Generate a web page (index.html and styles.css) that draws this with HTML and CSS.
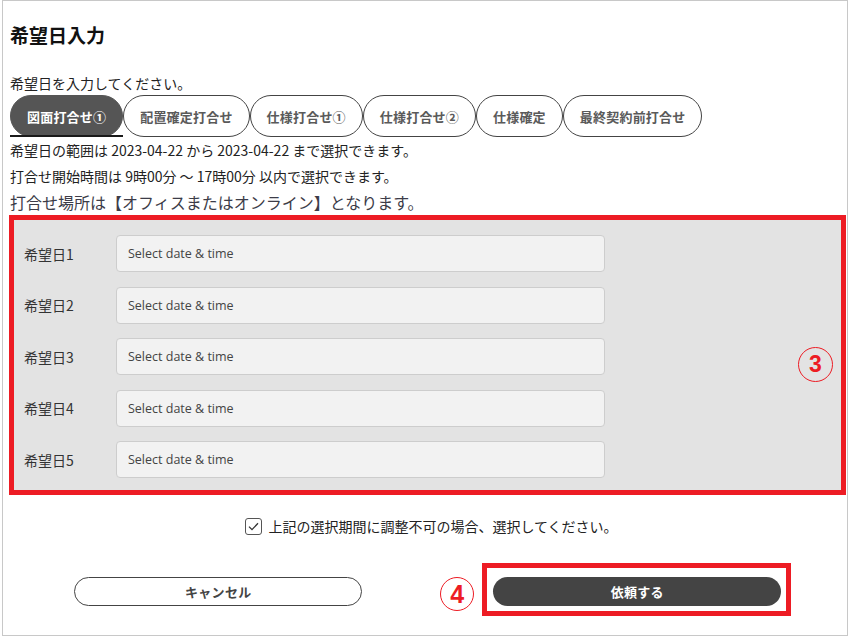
FILE: index.html
```html
<!DOCTYPE html>
<html lang="ja">
<head>
    <meta charset="UTF-8">
    <meta name="viewport" content="width=device-width, initial-scale=1.0">
    <title>希望日入力</title>
    <link rel="stylesheet" href="styles.css">
</head>
<body>
    <div class="page">
        <h1 class="title">希望日入力</h1>
        <p class="lead">希望日を入力してください。</p>
        <ul class="tabs">
            <li class="tab active">図面打合せ①</li>
            <li class="tab">配置確定打合せ</li>
            <li class="tab">仕様打合せ①</li>
            <li class="tab">仕様打合せ②</li>
            <li class="tab">仕様確定</li>
            <li class="tab">最終契約前打合せ</li>
        </ul>
        <p class="info">希望日の範囲は 2023-04-22 から 2023-04-22 まで選択できます。</p>
        <p class="info">打合せ開始時間は 9時00分 ～ 17時00分 以内で選択できます。</p>
        <p class="info place">打合せ場所は【オフィスまたはオンライン】となります。</p>

        <div class="dates">
            <div class="date-list">
                <div class="date-row"><label>希望日1</label><input type="text" placeholder="Select date &amp; time"></div>
                <div class="date-row"><label>希望日2</label><input type="text" placeholder="Select date &amp; time"></div>
                <div class="date-row"><label>希望日3</label><input type="text" placeholder="Select date &amp; time"></div>
                <div class="date-row"><label>希望日4</label><input type="text" placeholder="Select date &amp; time"></div>
                <div class="date-row"><label>希望日5</label><input type="text" placeholder="Select date &amp; time"></div>
            </div>
            <span class="num num-3">3</span>
        </div>

        <label class="agree">
            <span class="check">
                <svg width="11" height="9" viewBox="0 0 11 9"><path d="M1 4.6 L4 7.6 L10 1.2" fill="none" stroke="#333" stroke-width="1.3"/></svg>
            </span>
            上記の選択期間に調整不可の場合、選択してください。
        </label>

        <div class="actions">
            <div class="action">
                <button class="btn btn-cancel">キャンセル</button>
            </div>
            <div class="action">
                <div class="submit-frame">
                    <span class="num num-4">4</span>
                    <button class="btn btn-submit">依頼する</button>
                </div>
            </div>
        </div>
    </div>
</body>
</html>
```

FILE: styles.css
```css
body {
    margin: 0;
    font-family: "Noto Sans CJK JP", "Noto Sans", sans-serif;
    color: #222;
    background: #fff;
}
.page {
    box-sizing: border-box;
    width: 846px;
    height: 636px;
    margin-left: 2px;
    padding: 0 1px 0 6px;
    border: 1px solid #c8c8c8;
}
.title {
    margin: 22px 0 0 1px;
    font-size: 19px;
    line-height: 24px;
    font-weight: bold;
    color: #111;
}
.lead {
    margin: 26px 0 0 1px;
    font-size: 14px;
    line-height: 20px;
    color: #222;
}
.tabs {
    display: flex;
    margin: 2px 0 0 1px;
    padding: 0;
    list-style: none;
}
.tab {
    position: relative;
    box-sizing: border-box;
    display: flex;
    align-items: center;
    height: 42px;
    padding: 0 16px;
    border: 1px solid #444;
    border-radius: 21px;
    font-size: 13px;
    font-weight: bold;
    letter-spacing: 0.2px;
    color: #5a5a5a;
}
.tab.active {
    background-color: #555;
    border-color: #555;
    color: #fff;
}
.tab.active::after {
    content: "";
    position: absolute;
    left: -1px;
    right: -1px;
    bottom: -1px;
    height: 2px;
    background: #1a1a1a;
}
.info {
    margin: 0 0 0 1px;
    font-size: 14px;
    line-height: 26px;
    color: #222;
}
.info:first-of-type {
    margin-top: 4px;
}
.info.place {
    font-size: 16px;
    color: #3c3c48;
}

.dates {
    display: flex;
    box-sizing: border-box;
    height: 280px;
    padding: 15px 8px 14px 10px;
    border: 5px solid #ed1c24;
    background-color: #e3e3e3;
}
.date-list {
    display: flex;
    flex-direction: column;
    gap: 14.5px;
}
.date-row {
    display: flex;
    align-items: center;
}
.date-row label {
    width: 92px;
    font-size: 14px;
    color: #333;
}
.date-row input {
    box-sizing: border-box;
    width: 489px;
    height: 37px;
    padding: 0 11px;
    border: 1px solid #cdcdcd;
    border-radius: 4px;
    background-color: #f2f2f2;
    font-family: "Open Sans", "Liberation Sans", sans-serif;
    font-size: 12.5px;
    color: #444;
}
.date-row input::placeholder {
    color: #444;
}
.num {
    display: flex;
    align-items: center;
    justify-content: center;
    box-sizing: border-box;
    width: 35px;
    height: 35px;
    border: 1px solid #ed1c24;
    border-radius: 50%;
    font-family: "Liberation Sans", Arial, sans-serif;
    font-weight: bold;
    color: #ed1c24;
}
.num-3 {
    align-self: center;
    margin: 18px 0 0 auto;
    font-size: 23px;
}
.num-4 {
    position: absolute;
    left: -47px;
    top: 9px;
    width: 34px;
    height: 34px;
    font-size: 25px;
}

.agree {
    display: flex;
    align-items: center;
    justify-content: center;
    margin-top: 21px;
    padding-left: 8px;
    font-size: 14px;
    line-height: 20px;
    color: #222;
}
.check {
    display: flex;
    align-items: center;
    justify-content: center;
    box-sizing: border-box;
    width: 17px;
    height: 17px;
    margin-right: 6px;
    border: 1px solid #555;
    border-radius: 3px;
}

.actions {
    display: flex;
    margin-top: 27px;
}
.action {
    flex: 1;
    display: flex;
    justify-content: center;
    align-items: flex-start;
}
.btn {
    box-sizing: border-box;
    width: 288px;
    height: 29px;
    border-radius: 15px;
    font-family: "Noto Sans CJK JP", sans-serif;
    font-size: 13px;
    font-weight: bold;
    letter-spacing: 0.3px;
}
.btn-cancel {
    margin-top: 14px;
    border: 1px solid #444;
    background: #fff;
    color: #444;
}
.submit-frame {
    position: relative;
    padding: 9px 5px 5px 6px;
    border: 5px solid #ed1c24;
    line-height: 0;
}
.btn-submit {
    border: none;
    background: #444;
    color: #fff;
}
```
